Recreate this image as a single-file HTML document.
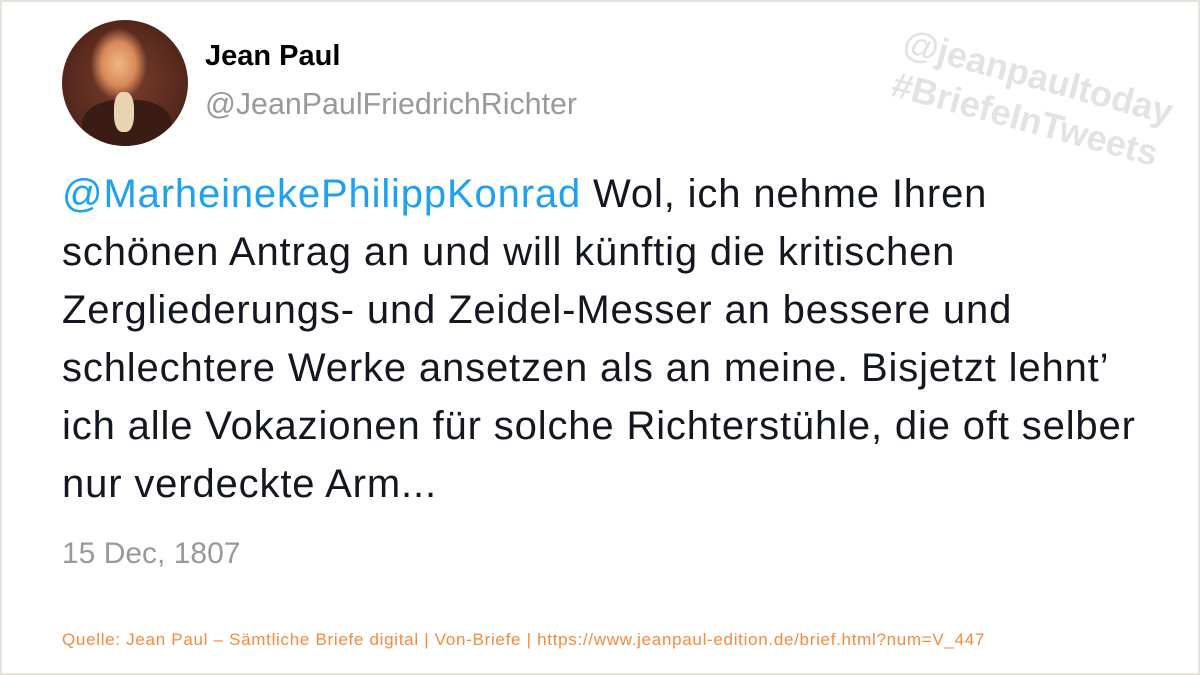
<!DOCTYPE html>
<html><head><meta charset="utf-8"><style>
html,body{margin:0;padding:0;}
body{width:1200px;height:675px;position:relative;overflow:hidden;background:#fff;font-family:"Liberation Sans",sans-serif;}
.frame{position:absolute;left:0;top:0;width:1196px;height:671px;border:2px solid #e4e4dc;}
.av{position:absolute;left:62px;top:20px;width:126px;height:126px;border-radius:50%;background:radial-gradient(ellipse 30% 38% at 45% 35%,#f2b884 0%,#d98a5a 45%,transparent 75%),radial-gradient(circle at 50% 50%,#7a3e2c 0%,#5a2a1e 60%,#3e1a12 100%);overflow:hidden;}
.av .coat{position:absolute;left:20px;top:80px;width:90px;height:60px;background:#3a1c14;border-radius:40% 40% 0 0;}
.av .cravat{position:absolute;left:52px;top:72px;width:20px;height:40px;background:#e8d4b0;border-radius:40%;}
.name{position:absolute;left:205px;top:40px;font-size:29px;font-weight:bold;color:#000;}
.handle{position:absolute;left:205px;top:87px;font-size:30.4px;color:#999;}
.body{position:absolute;left:62px;top:165px;font-size:40px;letter-spacing:0.85px;line-height:58px;color:#14171f;white-space:nowrap;}
.body .m{color:#1da1f2;}
.date{position:absolute;left:62px;top:537px;font-size:30px;color:#999;}
.src{position:absolute;left:62px;top:630px;font-size:17px;letter-spacing:0.7px;color:#f58a3c;white-space:nowrap;}
.wm{position:absolute;left:910px;top:20px;transform:rotate(15deg);transform-origin:left top;color:#e3e3e3;font-weight:bold;font-size:36px;line-height:44px;white-space:nowrap;}
</style></head><body>
<div class="frame"></div>
<div class="wm">@jeanpaultoday<br>#BriefeInTweets</div>
<div class="av"><div class="coat"></div><div class="cravat"></div></div>
<div class="name">Jean Paul</div>
<div class="handle">@JeanPaulFriedrichRichter</div>
<div class="body"><span class="m">@MarheinekePhilippKonrad</span> Wol, ich nehme Ihren<br>schönen Antrag an und will künftig die kritischen<br>Zergliederungs- und Zeidel-Messer an bessere und<br>schlechtere Werke ansetzen als an meine. Bisjetzt lehnt’<br>ich alle Vokazionen für solche Richterstühle, die oft selber<br>nur verdeckte Arm...</div>
<div class="date">15 Dec, 1807</div>
<div class="src">Quelle: Jean Paul – Sämtliche Briefe digital | Von-Briefe | https://www.jeanpaul-edition.de/brief.html?num=V_447</div>
</body></html>
